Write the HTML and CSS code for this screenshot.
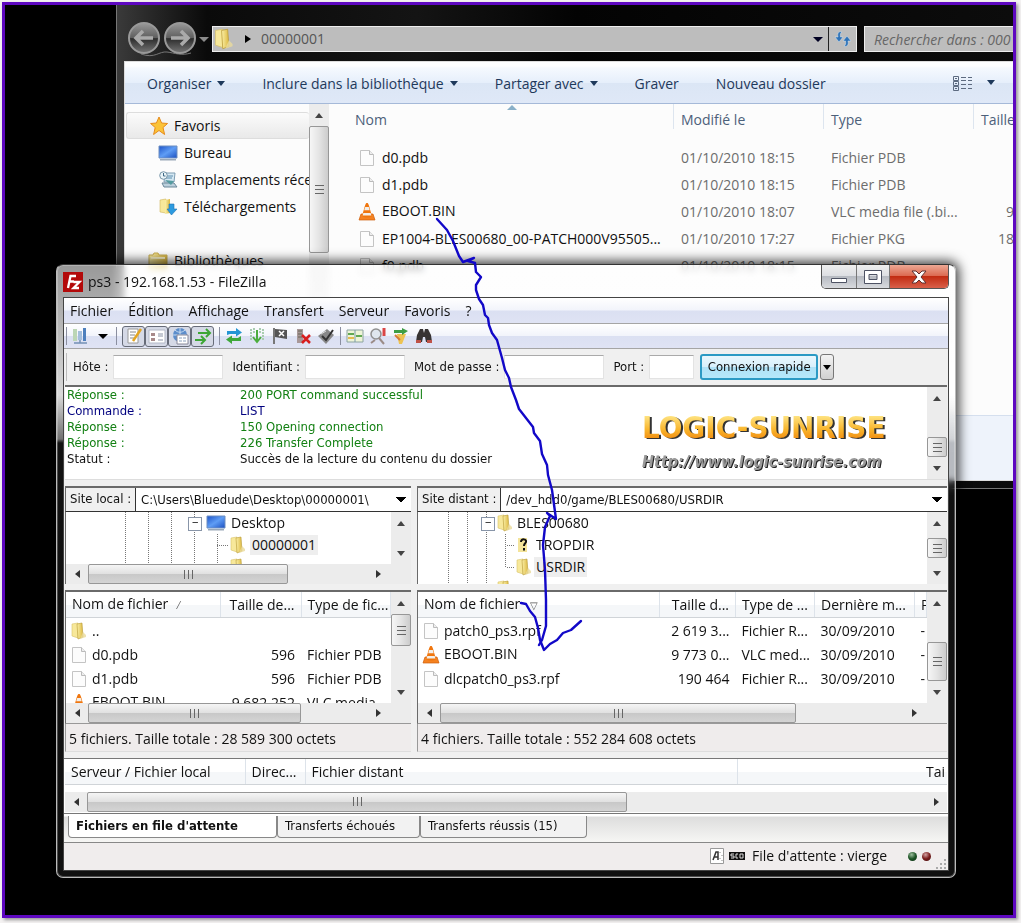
FILE: index.html
```html
<!DOCTYPE html>
<html lang="fr">
<head>
<meta charset="utf-8">
<title>ps3 - 192.168.1.53 - FileZilla</title>
<link rel="stylesheet" href="styles.css">
</head>
<body>
<svg class="defs" aria-hidden="true">
  <defs>
    <linearGradient id="gold" x1="0" x2="1" y1="0" y2="0"><stop offset="0" stop-color="#fbf0a8"/><stop offset="1" stop-color="#dcb840"/></linearGradient>
    <linearGradient id="screen" x1="0" x2="1" y1="0" y2="1"><stop offset="0" stop-color="#1c52c8"/><stop offset=".5" stop-color="#5f9df5"/><stop offset="1" stop-color="#1b4fc0"/></linearGradient>
    <linearGradient id="glass" x1="0" x2="0" y1="0" y2="1"><stop offset="0" stop-color="#999"/><stop offset=".5" stop-color="#5e5e5e"/><stop offset=".52" stop-color="#2c2c2c"/><stop offset="1" stop-color="#777"/></linearGradient>
    <symbol id="folder" viewBox="0 0 18 18"><path d="M2 2l6-1v15l-6-2z" fill="#f7e89a" stroke="#d9c26a" stroke-width=".6"/><path d="M7 2l5-1 1 14-5 2z" fill="url(#gold)" stroke="#b99a35" stroke-width=".6"/><path d="M13 10l3 3v2l-6 2z" fill="#eadb9c" opacity=".8"/></symbol>
    <symbol id="page" viewBox="0 0 18 18"><path d="M2.500 1.500h9l4 4v11h-13z" fill="#fcfcfc" stroke="#c4c4c4"/><path d="M11.500 1.500v4h4" fill="#eee" stroke="#bbb"/></symbol>
    <symbol id="cone" viewBox="0 0 18 18"><path d="M3 11h12l2 6H1z" fill="#f58220" stroke="#cf5f0c" stroke-width=".7"/><path d="M9 0c1.500 0 1.500 1 5 13-3 2-7 2-10 0C7.500 1 7.500 0 9 0z" fill="#f0760e"/><path d="M7.200 4h3.600l.9 3.200H6.200zM5.300 10h7.400l.7 2.400H4.600z" fill="#f2efe9"/></symbol>
    <symbol id="screenicon" viewBox="0 0 20 18"><path d="M1 2h18v12H1z" fill="url(#screen)" stroke="#6e8fc0"/><path d="M2 15h16v1.500H2z" fill="#9aa8b8"/></symbol>
    <symbol id="star" viewBox="0 0 18 18"><path d="M9 0l2.600 6 6 .5-4.600 4 1.600 7L9 13.500 3.600 17.500l1.600-7L.6 6.500l5.800-.5z" fill="#fbc338" stroke="#e58a1c"/></symbol>
    <symbol id="recent" viewBox="0 0 18 18"><path d="M6 2h10l-1 9H5z" fill="#d5e8f3" stroke="#7e9db2"/><path d="M7 5h7M7 7h6" stroke="#5c8eae"/><path d="M3 12h12l3 4H5z" fill="#bcd0dc" stroke="#6b8799"/><circle cx="4.500" cy="4.500" r="3.800" fill="#eaf4f8" stroke="#7795a8"/><path d="M4.500 2v3h2" stroke="#3e6884" fill="none"/><path d="M6 9l6 5 3-4z" fill="#549b9f"/></symbol>
    <symbol id="down" viewBox="0 0 18 18"><path d="M1 2l6-1v14l-6-1z" fill="#f7e89a" stroke="#d0b65c" stroke-width=".6"/><path d="M6 2l5-1v14l-5 1z" fill="url(#gold)"/><path d="M10 6h5v5h3l-5.500 6L8 11h2z" fill="#2c9be0" stroke="#2174b4" stroke-width=".6"/></symbol>
    <symbol id="lib" viewBox="0 0 20 18"><path d="M1 3h4l1-2h4l1 2h8v14H1z" fill="url(#gold)" stroke="#c9ae52"/><path d="M3 6h14" stroke="#fff7c9" stroke-width="2"/></symbol>
  </defs>
</svg>
<main class="desktop">

  <section class="explorer" aria-label="Explorateur">
    <header class="nav">
      <svg class="orbs" width="84" height="36" viewBox="0 0 84 36" role="img" aria-label="Précédent, Suivant">
        <path d="M14 33c14 5 18-3 26-2s14 4 24 1" fill="none" stroke="#777"/>
        <circle cx="17" cy="17" r="15" fill="url(#glass)" stroke="#999" stroke-width="2"/><circle cx="53" cy="17" r="15" fill="url(#glass)" stroke="#999" stroke-width="2"/>
        <path d="M26 17H10m6-7l-7 7 7 7" fill="none" stroke="#aaa" stroke-width="3.500"/><path d="M44 17h16m-6-7l7 7-7 7" fill="none" stroke="#aaa" stroke-width="3.500"/>
        <path d="M72 16h10l-5 5z" fill="#8b8b8b"/>
      </svg>
      <div class="address"><svg width="22" height="22"><use href="#folder"/></svg><span class="tri-right"></span><span class="crumb">00000001</span><span class="tri-down"></span>
        <button class="refresh" aria-label="Actualiser"><svg width="18" height="16" viewBox="0 0 18 16"><path d="M8 1C5 0 3 2 4 6H1l4 5 4-5H6.500c-.5-3 0-4 1.500-5z" fill="#2f73b8" stroke="#d7e6f3" stroke-width=".5"/><path d="M10 15c3 1 5-1 4-5h3l-4-5-4 5h2.500c.5 3 0 4-1.500 5z" fill="#2f73b8" stroke="#d7e6f3" stroke-width=".5"/></svg></button></div>
      <input class="search" type="text" placeholder="Rechercher dans : 000" aria-label="Rechercher">
    </header>
    <div class="pane">
      <div class="commands">
        <button>Organiser<i class="caret"></i></button><button>Inclure dans la bibliothèque<i class="caret"></i></button><button>Partager avec<i class="caret"></i></button><button>Graver</button><button>Nouveau dossier</button>
        <button class="views" aria-label="Affichage"><svg width="20" height="16" viewBox="0 0 20 16" fill="none" stroke="#5d6b80"><path d="M.5.500h5v4h-5zM.5 5.500h5v4h-5zM.5 10.500h5v4h-5zM8 1.500h5M15 1.500h4M8 4.500h5M15 4.500h4M8 8.500h5M15 8.500h4M8 12.500h5M15 12.500h4M2 2.500h2M2 7.500h2M2 12.500h2"/></svg><i class="caret"></i></button>
      </div>
      <div class="exp-body">
        <nav class="places">
          <a href="#" class="root"><svg width="18" height="18"><use href="#star"/></svg>Favoris</a>
          <a href="#"><svg width="20" height="18"><use href="#screenicon"/></svg>Bureau</a>
          <a href="#"><svg width="20" height="18"><use href="#recent"/></svg>Emplacements récents</a>
          <a href="#"><svg width="20" height="18"><use href="#down"/></svg>Téléchargements</a>
          <a href="#" class="libs"><svg width="20" height="18"><use href="#lib"/></svg>Bibliothèques</a>
        </nav>
        <div class="vscroll"><button class="up" aria-label="Haut"></button><span class="thumb tall"></span><span class="rest"></span><button class="dn" aria-label="Bas"></button></div>
        <div class="files">
          <table class="exp-table">
            <colgroup><col class="e1"><col class="e2"><col class="e2"><col class="e4"></colgroup>
            <thead><tr><th><span>Nom</span></th><th><span>Modifié le</span></th><th><span>Type</span></th><th><span>Taille</span></th></tr></thead>
            <tbody>
              <tr><td><svg width="18" height="18"><use href="#page"/></svg>d0.pdb</td><td>01/10/2010 18:15</td><td>Fichier PDB</td><td></td></tr>
              <tr><td><svg width="18" height="18"><use href="#page"/></svg>d1.pdb</td><td>01/10/2010 18:15</td><td>Fichier PDB</td><td></td></tr>
              <tr><td><svg width="18" height="20"><use href="#cone"/></svg>EBOOT.BIN</td><td>01/10/2010 18:07</td><td>VLC media file (.bi...</td><td>9</td></tr>
              <tr><td><svg width="18" height="18"><use href="#page"/></svg>EP1004-BLES00680_00-PATCH000V95505...</td><td>01/10/2010 17:27</td><td>Fichier PKG</td><td>18</td></tr>
              <tr><td><svg width="18" height="18"><use href="#page"/></svg>f0.pdb</td><td>01/10/2010 18:15</td><td>Fichier PDB</td><td></td></tr>
            </tbody>
          </table>
          <svg class="sort" width="10" height="5" viewBox="0 0 10 5"><path d="M0 5l5-5 5 5z" fill="#8ab0c8"/></svg>
        </div>
      </div>
      <div class="details"></div>
    </div>
  </section>

  <section class="fz" aria-label="FileZilla">
    <header class="title">
      <svg width="20" height="20" viewBox="0 0 20 20"><path d="M0 0h20v20H0z" fill="#b30a0a"/><path d="M5 16L7.500 4H13M6.500 9.500H11M10.500 10h6l-6 6h5.500" fill="none" stroke="#fff" stroke-width="2.300"/></svg>
      <h1>ps3 - 192.168.1.53 - FileZilla</h1>
      <div class="caption">
        <button aria-label="Réduire"><svg width="18" height="14" viewBox="0 0 18 14"><path d="M1.500 8.500h15v4h-15z" fill="#fff" stroke="#4e5364"/></svg></button><button aria-label="Agrandir"><svg width="18" height="14" viewBox="0 0 18 14"><path fill-rule="evenodd" d="M.5.500h17v13H.5zM5 4.500v5h8v-5z" fill="#fff" stroke="#4e5364"/></svg></button><button class="close" aria-label="Fermer"><svg width="16" height="14" viewBox="0 0 16 14"><path d="M1 1h4l3 3 3-3h4l-5 6 5 6h-4L8 10l-3 3H1l5-6z" fill="#fff" stroke="#5e3030"/></svg></button>
      </div>
    </header>
    <div class="client">
      <nav class="menu"><button>Fichier</button><button>Édition</button><button>Affichage</button><button>Transfert</button><button>Serveur</button><button>Favoris</button><button>?</button></nav>
      <div class="tools">
        <i class="sep"></i>
        <button aria-label="Gestionnaire de sites"><svg viewBox="0 0 18 18"><path d="M1 2h4v12H1z" fill="#bcd6b5"/><path d="M6 4h4v9H6z" fill="#a5bfdc"/><path d="M11 1h3v13h-3z" fill="#4e80bd"/><path d="M2 16h13M8 13v3" stroke="#7390b5" stroke-width="1.500"/></svg></button>
        <button class="small" aria-label="Sites récents"><i class="tri"></i></button>
        <i class="sep"></i>
        <div class="toggles">
          <button aria-label="Journal"><svg viewBox="0 0 18 18"><path d="M3 2h10v14H3z" fill="#fff" stroke="#999"/><path d="M5 5h6M5 8h5M5 11h4" stroke="#888"/><path d="M16 2L8 14" stroke="#e3a522" stroke-width="2.500"/></svg></button><button aria-label="Arborescence locale"><svg viewBox="0 0 18 18"><path d="M1 3h16v13H1z" fill="#fff" stroke="#b2b8c6"/><path d="M3 6h4v3H3zM3 11h4v3H3z" fill="#a88a8a"/><path d="M10 7h5M10 9h5M10 13h5" stroke="#8a93a5"/></svg></button><button aria-label="Arborescence distante"><svg viewBox="0 0 18 18"><circle cx="9" cy="8" r="7" fill="#5c8dcb"/><path d="M2 8h13M9 1v13M4 3c3 3 7 3 10 0" stroke="#c7dcf2" fill="none"/><path d="M6 8h11v9H6z" fill="#fff" stroke="#889"/><path d="M8 11h3M12 11h3M8 14h3M12 14h3" stroke="#8ba0bd"/></svg></button><button aria-label="File d'attente"><svg viewBox="0 0 18 18" fill="none" stroke="#3ca634" stroke-width="2"><path d="M4 6h12M12 2l4 4-4 4M1 13h10M7 9l4 4-4 4"/></svg></button>
        </div>
        <i class="sep"></i>
        <button aria-label="Actualiser"><svg viewBox="0 0 18 18"><path d="M2 8V4h9V1l6 4.500-6 4V7H5z" fill="#2495d4"/><path d="M16 9v5H7v3l-6-4.500 6-4V11h6z" fill="#3ea83a"/></svg></button>
        <button aria-label="Traiter la file"><svg viewBox="0 0 18 18"><path d="M3 2v12M6 1v5M12 1v5M15 2v12" stroke="#a9cdb0" stroke-width="2" stroke-dasharray="2 1"/><path d="M9 3v11M5 10l4 5 4-5" fill="none" stroke="#4bad3d" stroke-width="2"/></svg></button>
        <button aria-label="Annuler"><svg viewBox="0 0 18 18"><path d="M3 1v16" stroke="#777" stroke-width="2"/><path d="M4 2l12 1v9L4 10z" fill="#555"/><path d="M8 4l5 5m0-5l-5 5" stroke="#fff" stroke-width="1.500"/></svg></button>
        <button aria-label="Déconnecter"><svg viewBox="0 0 18 18"><path d="M3 2h6v14H3z" fill="#a89898"/><path d="M4 4h4M4 7h4M4 10h4" stroke="#665"/><path d="M8 8l8 8m0-8l-8 8" stroke="#d81e1e" stroke-width="2.500"/></svg></button>
        <button aria-label="Reconnecter"><svg viewBox="0 0 18 18"><path d="M1 9l9-7 7 6-8 9z" fill="#888"/><path d="M5 9l4 4 7-10" fill="none" stroke="#333" stroke-width="2"/><path d="M4 7l5-3" stroke="#ddd"/></svg></button>
        <i class="sep"></i>
        <button aria-label="Filtres"><svg viewBox="0 0 18 18"><path d="M1 3h16v12H1z" fill="#eef4d8" stroke="#8ca4a0"/><path d="M9 3v12" stroke="#7a9baa"/><path d="M2 7h6M10 9h6" stroke="#61a852" stroke-width="2"/><path d="M2 11h6" stroke="#e5bc50" stroke-width="2"/></svg></button>
        <button aria-label="Comparer"><svg viewBox="0 0 18 18"><circle cx="7" cy="7" r="5" fill="#dfe6ee" stroke="#909090" stroke-width="1.500"/><path d="M10 11l5 6M2 16l4-3" stroke="#9b8c88" stroke-width="2"/><path d="M15 1v8" stroke="#da4545" stroke-width="3"/></svg></button>
        <button aria-label="Navigation synchronisée"><svg viewBox="0 0 18 18"><path d="M5 7h9l-4 10H7z" fill="#edc353"/><path d="M2 3h8V1l6 3-6 4V6H2z" fill="#3e9d45"/><path d="M3 8l5 5" stroke="#d67b35" stroke-width="2"/></svg></button>
        <button aria-label="Rechercher"><svg viewBox="0 0 18 18"><path d="M2 8l3-6h3l1 4 1-4h3l3 6 1 7h-6l-1-5H8l-1 5H1z" fill="#373333"/><path d="M1 13h5v3H1zM12 13h5v3h-5z" fill="#be5147"/></svg></button>
      </div>
      <form class="quick">
        <i class="sep"></i>
        <label for="host">Hôte :</label><input id="host" type="text">
        <label for="user">Identifiant :</label><input id="user" type="text" class="mid">
        <label for="pass">Mot de passe :</label><input id="pass" type="password" class="mid">
        <label for="port">Port :</label><input id="port" type="text" class="short">
        <button type="button" class="go">Connexion rapide</button><button type="button" class="more" aria-label="Historique"><i class="tri"></i></button>
      </form>
      <div class="log">
        <dl>
          <dt class="ok">Réponse :</dt><dd class="ok">200 PORT command successful</dd>
          <dt class="cmd">Commande :</dt><dd class="cmd">LIST</dd>
          <dt class="ok">Réponse :</dt><dd class="ok">150 Opening connection</dd>
          <dt class="ok">Réponse :</dt><dd class="ok">226 Transfer Complete</dd>
          <dt>Statut :</dt><dd>Succès de la lecture du contenu du dossier</dd>
        </dl>
        <div class="brand"><strong>LOGIC-SUNRISE</strong><em>Http://www.logic-sunrise.com</em></div>
        <div class="vscroll"><button class="up" aria-label="Haut"></button><span class="rest"></span><span class="thumb mini"></span><button class="dn" aria-label="Bas"></button></div>
      </div>
      <div class="sites">
        <div class="site">
          <div class="path"><label for="local">Site local :</label><select id="local"><option>C:\Users\Bluedude\Desktop\00000001\</option></select></div>
          <div class="treebox">
            <div class="treerow">
              <div class="tree">
                <div class="node"><i></i><i></i><i></i><i class="box"></i><svg width="20" height="18"><use href="#screenicon"/></svg><span>Desktop</span></div>
                <div class="node"><i></i><i></i><i></i><i></i><i class="branch"></i><svg width="18" height="18"><use href="#folder"/></svg><span class="sel">00000001</span></div>
                <div class="node"><i></i><i></i><i></i><i></i><i class="branch"></i><svg width="18" height="18"><use href="#folder"/></svg></div>
              </div>
              <div class="vscroll"><button class="up" aria-label="Haut"></button><span class="rest"></span><button class="dn" aria-label="Bas"></button></div>
            </div>
            <div class="hscroll"><button class="lt" aria-label="Gauche"></button><span class="thumb w1"></span><span class="rest"></span><button class="rt" aria-label="Droite"></button></div>
          </div>
          <div class="listbox">
            <div class="treerow">
              <div class="list">
                <table class="flat">
                  <colgroup><col class="l1"><col class="l2"><col></colgroup>
                  <thead><tr><th>Nom de fichier <span class="mark">⁄</span></th><th class="num">Taille de...</th><th>Type de fic...</th></tr></thead>
                  <tbody>
                    <tr><td><svg width="18" height="18"><use href="#folder"/></svg>..</td><td></td><td></td></tr>
                    <tr><td><svg width="18" height="18"><use href="#page"/></svg>d0.pdb</td><td class="num">596</td><td>Fichier PDB</td></tr>
                    <tr><td><svg width="18" height="18"><use href="#page"/></svg>d1.pdb</td><td class="num">596</td><td>Fichier PDB</td></tr>
                    <tr><td><svg width="18" height="20"><use href="#cone"/></svg>EBOOT.BIN</td><td class="num">9 682 252</td><td>VLC media</td></tr>
                  </tbody>
                </table>
              </div>
              <div class="vscroll"><button class="up" aria-label="Haut"></button><span class="thumb mid"></span><span class="rest"></span><button class="dn" aria-label="Bas"></button></div>
            </div>
            <div class="hscroll"><button class="lt" aria-label="Gauche"></button><span class="thumb w2"></span><span class="rest"></span><button class="rt" aria-label="Droite"></button></div>
          </div>
          <p class="sum">5 fichiers. Taille totale : 28 589 300 octets</p>
        </div>
        <div class="site remote">
          <div class="path"><label for="remote">Site distant :</label><select id="remote"><option>/dev_hdd0/game/BLES00680/USRDIR</option></select></div>
          <div class="treebox">
            <div class="treerow">
              <div class="tree">
                <div class="node"><i></i><i></i><i class="box"></i><svg width="18" height="18"><use href="#folder"/></svg><span>BLES00680</span></div>
                <div class="node"><i></i><i></i><i></i><i class="branch"></i><svg width="18" height="18" viewBox="0 0 18 18"><path d="M3 2h9v14H3z" fill="#f4e49a"/><path d="M6 6c0-4 6-3 5 0-.5 1.500-2 1.500-2 4M9 12v2.500" fill="none" stroke="#111" stroke-width="2"/></svg><span>TROPDIR</span></div>
                <div class="node"><i></i><i></i><i></i><i class="branch last"></i><svg width="18" height="18"><use href="#folder"/></svg><span class="sel">USRDIR</span></div>
                <div class="node"><i></i><i></i><i></i><svg width="18" height="18"><use href="#folder"/></svg></div>
              </div>
              <div class="vscroll"><button class="up" aria-label="Haut"></button><span class="rest"></span><span class="thumb mini"></span><span class="rest"></span><button class="dn" aria-label="Bas"></button></div>
            </div>
          </div>
          <div class="listbox">
            <div class="treerow">
              <div class="list">
                <table class="flat wide">
                  <colgroup><col><col class="r2"><col class="r3"><col class="r4"><col class="r5"></colgroup>
                  <thead><tr><th>Nom de fichier <span class="mark">▽</span></th><th class="num">Taille d...</th><th>Type de ...</th><th>Dernière m...</th><th>P</th></tr></thead>
                  <tbody>
                    <tr><td><svg width="18" height="18"><use href="#page"/></svg>patch0_ps3.rpf</td><td class="num">2 619 3...</td><td>Fichier R...</td><td>30/09/2010</td><td>-</td></tr>
                    <tr><td><svg width="18" height="20"><use href="#cone"/></svg>EBOOT.BIN</td><td class="num">9 773 0...</td><td>VLC med...</td><td>30/09/2010</td><td>-</td></tr>
                    <tr><td><svg width="18" height="18"><use href="#page"/></svg>dlcpatch0_ps3.rpf</td><td class="num">190 464</td><td>Fichier R...</td><td>30/09/2010</td><td>-</td></tr>
                  </tbody>
                </table>
              </div>
              <div class="vscroll"><button class="up" aria-label="Haut"></button><span class="rest"></span><span class="thumb big"></span><button class="dn" aria-label="Bas"></button></div>
            </div>
            <div class="hscroll"><button class="lt" aria-label="Gauche"></button><span class="thumb w3"></span><span class="rest"></span><button class="rt" aria-label="Droite"></button></div>
          </div>
          <p class="sum">4 fichiers. Taille totale : 552 284 608 octets</p>
        </div>
      </div>
      <div class="queue">
        <table class="flat">
          <colgroup><col class="q1"><col class="q2"><col class="q3"><col></colgroup>
          <thead><tr><th>Serveur / Fichier local</th><th>Direc...</th><th>Fichier distant</th><th class="num">Tai</th></tr></thead>
        </table>
        <div class="hscroll"><button class="lt" aria-label="Gauche"></button><span class="thumb w4"></span><span class="rest"></span><button class="rt" aria-label="Droite"></button></div>
      </div>
      <div class="tabs" role="tablist"><button role="tab" aria-selected="true" class="t1">Fichiers en file d'attente</button><button role="tab" class="t2">Transferts échoués</button><button role="tab" class="t3">Transferts réussis (15)</button></div>
      <footer class="status">
        <svg width="14" height="16" viewBox="0 0 14 16"><path d="M.5.500h13v15H.5z" fill="#fff" stroke="#999"/><path d="M3 12l3-8h2v8M4 9h4" fill="none" stroke="#333" stroke-width="1.500"/><path d="M10 4v1M12 7v1M10 10v1M12 12v1" stroke="#888"/></svg>
        <svg width="16" height="8" viewBox="0 0 16 8"><path d="M0 0h16v8H0z" fill="#111"/><path d="M5 2H2v2h3v2H2M9 2H7v4h2M11 2h3v4h-3z" fill="none" stroke="#ddd"/></svg>
        <span>File d'attente : vierge</span><i class="led green"></i><i class="led red"></i>
        <svg class="grip" width="11" height="11" viewBox="0 0 11 11" fill="#aaa"><path d="M8 0h2v2H8zM8 4h2v2H8zM8 8h2v2H8zM4 4h2v2H4zM4 8h2v2H4zM0 8h2v2H0z"/></svg>
      </footer>
    </div>
  </section>

  <svg class="scribble" width="200" height="460" viewBox="420 205 200 460" fill="none" stroke="#1208c8" stroke-width="2.400" stroke-linejoin="round" stroke-linecap="round" aria-hidden="true">
    <path d="M437 219l10 11 6 11 6 15 4 6 11-4-6 3 7 2 1 9 5 5-5 8v5l3 9 4 6 2 10 3 3 1 7 3 8 5 7 5 18 3 12 4 8 2 9 5 13 3 9 14 18 1 6 6 8 2 13 5 11 1 10 4 15 4 29-9-6 3 3-5 11-2 18 2 25 1 30v26l-4 14-3 5"/>
    <path d="M521 603l5 1 4 7 5 6 3 11 2 12 4 10 6-6 7-4 6-7 8-3 10-9"/>
  </svg>
</main>
</body>
</html>
```
FILE: styles.css
```css
* { box-sizing: border-box; }
body {
  margin: 0;
  min-height: 100vh;
  padding: 2px 5px 5px 2px;
  display: flex;
  background: #f4f2f2;
  font: 14px/20px "Open Sans", "Noto Sans", sans-serif;
  color: #111;
}
button, input, select { font: inherit; color: inherit; margin: 0; padding: 0; border: 0; background: none; }
svg { flex: none; display: block; }
a { color: inherit; text-decoration: none; }
p, h1, dl, dd { margin: 0; font: inherit; }
.defs { position: absolute; width: 0; height: 0; }

.desktop {
  position: relative;
  flex: 1;
  overflow: hidden;
  border: 3px solid #5e08c0;
  background: #000;
  box-shadow: 2px 2px 3px #999;
}

/* Explorer window */
.explorer {
  position: absolute;
  left: 111px;
  right: 0;
  top: 0;
  padding-left: 7px;
  padding-bottom: 7px;
  border-left: 1px solid #777;
  border-bottom: 1px solid #777;
  background: linear-gradient(90deg, #3a3a3a, #0a0a0a 90px, #141414 300px, #030303 460px, #0c0c0c);
}
.nav { display: flex; align-items: center; height: 56px; padding: 14px 0 2px 3px; gap: 0; }
.orbs { margin-right: 1px; }
.address {
  flex: 1;
  display: flex;
  align-items: center;
  height: 26px;
  border: 1px solid #eee;
  background: #bdbdbd;
  color: #555;
}
.tri-right { margin: 0 10px; border: 4px solid transparent; border-left: 6px solid #000; border-right: 0; }
.crumb { flex: 1; }
.tri-down { margin-right: 5px; border: 5px solid transparent; border-top-color: #002; border-bottom: 0; }
.refresh { width: 28px; height: 24px; border-left: 1px solid #222; display: grid; place-items: center; }
.search { width: 149px; height: 26px; margin-left: 7px; padding-left: 9px; border: 1px solid #eee; border-right: 0; background: #bdbdbd; font-style: italic; }
.search::placeholder { color: #666; opacity: 1; }
.pane { background: #fcfcfc; border: 1px solid #ddd; border-right: 0; }
.commands {
  display: flex;
  align-items: center;
  gap: 37px;
  height: 42px;
  padding: 2px 18px 0 22px;
  border-bottom: 1px solid #a5b9d8;
  background: linear-gradient(#fdfeff 4px, #f5f9fe 6px, #e6effb 50%, #dbe6f5 52%, #dfe8f7);
  color: #1e395b;
}
.caret { display: inline-block; margin: 0 0 3px 6px; border: 4px solid transparent; border-top: 5px solid #1e395b; border-bottom: 0; }
.commands .views { margin-left: auto; display: flex; align-items: center; gap: 8px; }
.exp-body { display: flex; height: 311px; }
.places { width: 184px; padding-top: 8px; overflow: hidden; white-space: nowrap; }
.places a { display: flex; align-items: center; gap: 6px; height: 27px; padding-left: 33px; }
.places .root { padding-left: 23px; margin-left: 1px; border: 1px solid #ddd; border-right: 0; border-radius: 3px; background: linear-gradient(#fbfbfb, #e9e9e9); }
.places .libs { padding-left: 23px; margin-top: 27px; }
.files { position: relative; flex: 1; overflow: hidden; margin-left: 10px; }
.sort { position: absolute; left: 168px; top: 1px; }
table { border-collapse: collapse; table-layout: fixed; width: 100%; }
th { font-weight: 400; text-align: left; }
th, td { padding: 0; white-space: nowrap; overflow: hidden; }
td svg { display: inline-block; vertical-align: middle; margin: -2px 6px 0 0; }
.exp-table { width: 735px; }
.e1 { width: 335px; }
.e2 { width: 150px; }
.e4 { width: 100px; }
.exp-table th { height: 40px; vertical-align: top; color: #4c607a; }
.exp-table th span { display: block; height: 25px; padding: 6px 7px 0; border-right: 1px solid #dde5ef; }
.exp-table td { height: 27px; padding-left: 7px; color: #6d6d6d; }
.exp-table th:first-child span { padding-left: 16px; }
.exp-table td:first-child { padding-left: 19px; color: #111; }
.exp-table td:last-child { padding-left: 24px; }
.exp-table tr:nth-child(3) td:last-child { padding-left: 32px; }
.details { height: 65px; background: #eef3fb; border-top: 1px solid #d5dfee; }

/* Scrollbars */
.vscroll, .hscroll { display: flex; flex: none; background: #ececec; }
.vscroll { flex-direction: column; width: 20px; }
.hscroll { height: 20px; padding-right: 22px; }
.vscroll button, .hscroll button { flex: none; display: grid; place-items: center; }
.vscroll button { height: 22px; }
.hscroll button { width: 22px; }
.vscroll button::before, .hscroll button::before { content: ""; border: 4px solid transparent; }
.vscroll .up::before { border-bottom: 5px solid #444; border-top: 0; }
.vscroll .dn::before { border-top: 5px solid #444; border-bottom: 0; }
.hscroll .lt::before { border-right: 5px solid #333; border-left: 0; }
.hscroll .rt::before { border-left: 5px solid #333; border-right: 0; }
.rest { flex: 1; }
.thumb { display: grid; place-items: center; border: 1px solid #979797; border-radius: 2px; }
.vscroll .thumb { background: linear-gradient(90deg, #f6f6f6, #e4e4e4 50%, #ccc); }
.hscroll .thumb { background: linear-gradient(#f5f5f5, #e0e0e0 50%, #c8c8c8 52%, #d4d4d4); }
.thumb::before { content: ""; width: 9px; height: 9px; }
.vscroll .thumb::before { background: repeating-linear-gradient(#666 0 1px, transparent 1px 4px); }
.hscroll .thumb::before { background: repeating-linear-gradient(90deg, #666 0 1px, transparent 1px 4px); }
.tall { height: 127px; }
.mini { height: 20px; }
.mid.thumb { height: 32px; }
.big { height: 39px; }
.w1 { width: 200px; }
.w2 { width: 213px; }
.w3 { width: 356px; }
.w4 { width: 540px; }

/* FileZilla window */
.fz {
  position: absolute;
  left: 51px;
  right: 57px;
  top: 259px;
  padding: 0 6px 6px;
  border: 1px solid #bbb;
  border-top-color: #333;
  border-radius: 7px;
  background: linear-gradient(rgba(255,255,255,.6), rgba(255,255,255,.85) 130px, rgba(190,190,190,.6) 174px, rgba(60,60,60,.3) 178px, rgba(40,40,40,.4));
  backdrop-filter: blur(3px);
  box-shadow: 0 0 12px 3px rgba(0,0,0,.75), inset 0 0 0 1px rgba(255,255,255,.25);
}
.title { display: flex; align-items: center; gap: 5px; height: 32px; }
.title h1 { flex: 1; padding-top: 2px; }
.title > svg { margin-top: 1px; }
.caption { display: flex; align-self: flex-start; height: 24px; border: 1px solid #555; border-top: 0; border-radius: 0 0 5px 5px; overflow: hidden; }
.caption button { display: grid; place-items: center; width: 35px; border-right: 1px solid #777; background: linear-gradient(#eee, #dcdee2 48%, #b7bbc2 50%, #d8dade); }
.caption button + button { width: 33px; }
.caption .close.close { width: 58px; border: 0; background: linear-gradient(#eda894, #dc6b52 46%, #c22c12 50%, #d9604a); }
.client { border: 1px solid #444; background: #f0f0f0; }
.menu, .tools { display: flex; align-items: center; height: 26px; border-bottom: 1px solid #a5a5a5; background: linear-gradient(#fff, #f2f4fb 48%, #dbe0f2 52%, #dfe3f4); }
.menu { gap: 15px; padding-left: 6px; }
.tools { height: 25px; gap: 5px; padding: 0 2px; }
.tools svg, .toggles svg { width: 18px; height: 18px; }
.sep { width: 1px; height: 18px; background: #8b8fa0; }
.tools .small { width: 16px; display: grid; place-items: center; }
.tri { border: 5px solid transparent; border-top-color: #000; border-bottom: 0; }
.toggles { display: flex; }
.toggles button { display: grid; place-items: center; width: 23px; height: 21px; border: 1px solid #666b78; border-radius: 3px; background: #d5d9e6; }
.quick, .log, .path, .tabs { font: 13px/16px "DejaVu Sans Condensed", "Open Sans", sans-serif; }
.quick, .path, .tabs { font-size: 12px; }
.quick { display: flex; align-items: center; height: 36px; padding-left: 2px; font-size: 13px; }
.quick .sep { height: 28px; background: #bbb; }
.quick label { margin: 0 5px 0 6px; }
.quick label:not(:first-of-type) { margin-left: 9px; }
.quick input { width: 110px; height: 24px; border: 1px solid #e3e3e3; border-top-color: #aaa; background: #fff; }
.quick .mid { width: 100px; }
.quick .short { width: 45px; }
.go { width: 118px; height: 26px; margin: 0 2px 0 6px; border: 2px solid #2c9ac4; border-radius: 3px; background: linear-gradient(#eaf7fd, #d8f0fb 48%, #b0e2f7 52%, #b5e8fa); white-space: nowrap; }
.more { width: 14px; height: 26px; border: 1px solid #777; border-radius: 3px; background: linear-gradient(#f3f3f3, #d0d0d0); display: grid; place-items: center; }
.more .tri { border-width: 4px; border-bottom: 0; border-top-width: 5px; }
.log { display: flex; height: 95px; border-top: 2px solid #6a6a6a; border-bottom: 1px solid #ddd; background: #fff; margin: 0 1px; }
.log dl { display: grid; grid-template-columns: 173px 1fr; grid-auto-rows: 16px; flex: 1; padding-left: 2px; white-space: nowrap; }
.ok { color: #138013; }
.cmd { color: #00007f; }
.brand { width: 243px; margin: 14px 42px 0 0; display: grid; align-content: start; white-space: nowrap; }
.brand strong { font-size: 31px; line-height: 52px; color: transparent; background: linear-gradient(#ffe98c 25%, #f9b52c 55%, #f08a10 75%); background-clip: text; -webkit-background-clip: text; filter: drop-shadow(2px 1px 0 #333); }
.brand em { font-weight: 700; font-size: 16px; line-height: 18px; color: #999; text-shadow: 1px 1px 0 #222; }

.sites { display: grid; grid-template-columns: minmax(0, 346fr) minmax(0, 530fr); gap: 6px; padding: 6px 1px 0; }
.path { display: flex; height: 26px; border-top: 2px solid #6a6a6a; border-left: 1px solid #6a6a6a; border-bottom: 1px solid #333; background: #fff; font-size: 13px; }
.path label { padding: 3px 4px 0; border-right: 1px solid #333; background: #f0f0f0; }
.path select {
  flex: 1;
  min-width: 0;
  padding: 0 4px 0 5px;
  appearance: none;
  background: linear-gradient(to bottom right, #000 50%, transparent 51%) right 5px center/5px 5px no-repeat, linear-gradient(to bottom left, #000 50%, transparent 51%) right 10px center/5px 5px no-repeat, #fff;
}
.treebox { display: flex; flex-direction: column; height: 72px; border-left: 1px solid #6a6a6a; background: #fff; }
.treerow { display: flex; flex: 1; min-height: 0; }
.tree { flex: 1; overflow: hidden; padding-left: 48px; }
.remote .tree { padding-left: 21px; }
.node { display: flex; align-items: center; height: 22px; }
.node i { position: relative; flex: none; width: 23px; height: 22px; background: repeating-linear-gradient(#777 0 1px, transparent 1px 2px) 11px 0/1px 100% no-repeat; }
.remote .node i { width: 19px; background-position-x: 9px; }
.node .box::before { content: "−"; position: absolute; left: 5px; top: 5px; width: 12px; height: 12px; border: 1px solid #8895a8; background: #fff; font-size: 12px; line-height: 9px; text-align: center; }
.remote .node .box::before { left: 4px; }
.node .branch::after { content: ""; position: absolute; left: 11px; right: 0; top: 11px; height: 1px; background: repeating-linear-gradient(90deg, #777 0 1px, transparent 1px 2px); }
.remote .node .last { height: 12px; align-self: flex-start; }
.node span { margin-left: 3px; padding: 0 2px; }
.remote .node span { margin-left: 1px; }
.sel { background: #eee; }
.listbox { display: flex; flex-direction: column; height: 134px; margin-top: 6px; border-top: 2px solid #6a6a6a; border-left: 1px solid #6a6a6a; border-bottom: 1px solid #999; background: #fff; }
.list { flex: 1; overflow: hidden; }
.flat th { height: 25px; padding: 1px 6px 0; border-right: 1px solid #dde3ea; border-bottom: 1px solid #d0d4d8; background: linear-gradient(#fff 50%, #f5f7f9 52%); }
.flat td { height: 24px; padding: 0 6px 0 6px; }
.flat td:first-child { padding-left: 4px; }
.flat td:first-child svg { margin-right: 4px; }
.flat tbody::before { content: ""; display: block; height: 1px; }
.flat .num { text-align: right; padding-left: 0; }
.mark { font-size: 10px; margin-left: 6px; color: #555; }
.l1 { width: 154px; }
.l2 { width: 81px; }
.r2 { width: 76px; }
.r3 { width: 79px; }
.r4 { width: 100px; }
.r5 { width: 12px; }
.wide th:last-child, .wide td:last-child { padding-right: 0; }
.sum { height: 28px; padding: 5px 3px; border-left: 1px solid #999; border-bottom: 1px solid #ddd; background: #efecec; }
.queue { margin-top: 6px; padding: 0 1px; border-top: 1px solid #777; border-bottom: 1px solid #777; background: #fff; }
.queue .hscroll { margin: 7px 0 1px; padding-right: 0; }
.queue .num { padding-right: 2px; border-right: 0; }
.q1 { width: 180px; }
.q2 { width: 60px; }
.q3 { width: 432px; }
.tabs { display: flex; height: 29px; padding: 2px 4px 4px; border-bottom: 1px solid #888; background: linear-gradient(#fff 2px, #ddd 3px, #f6f6f4); font-size: 13px; }
.tabs button { padding: 0 6px 0 7px; border: 1px solid #888; border-top: 0; border-radius: 0 0 4px 4px; background: #f2f2f2; text-align: left; white-space: nowrap; }
.tabs .t1 { width: 209px; background: #fff; font-weight: 700; }
.tabs .t2 { width: 143px; }
.tabs .t3 { width: 167px; }
.status { display: flex; align-items: center; justify-content: flex-end; height: 27px; gap: 5px; padding-right: 1px; background: #f0eded; }
.status span { margin: 0 16px 0 2px; }
.led { width: 9px; height: 9px; border-radius: 50%; background: radial-gradient(circle at 40% 30%, #9dbd9d, #1d5426 50%, #0a2a10); }
.led.red { background: radial-gradient(circle at 40% 30%, #d0a0a0, #7a1c1c 50%, #3a0a0a); }
.grip { align-self: flex-end; }

/* Hand-drawn arrow laid over both windows */
.scribble { position: absolute; left: 415px; top: 200px; pointer-events: none; }
```
